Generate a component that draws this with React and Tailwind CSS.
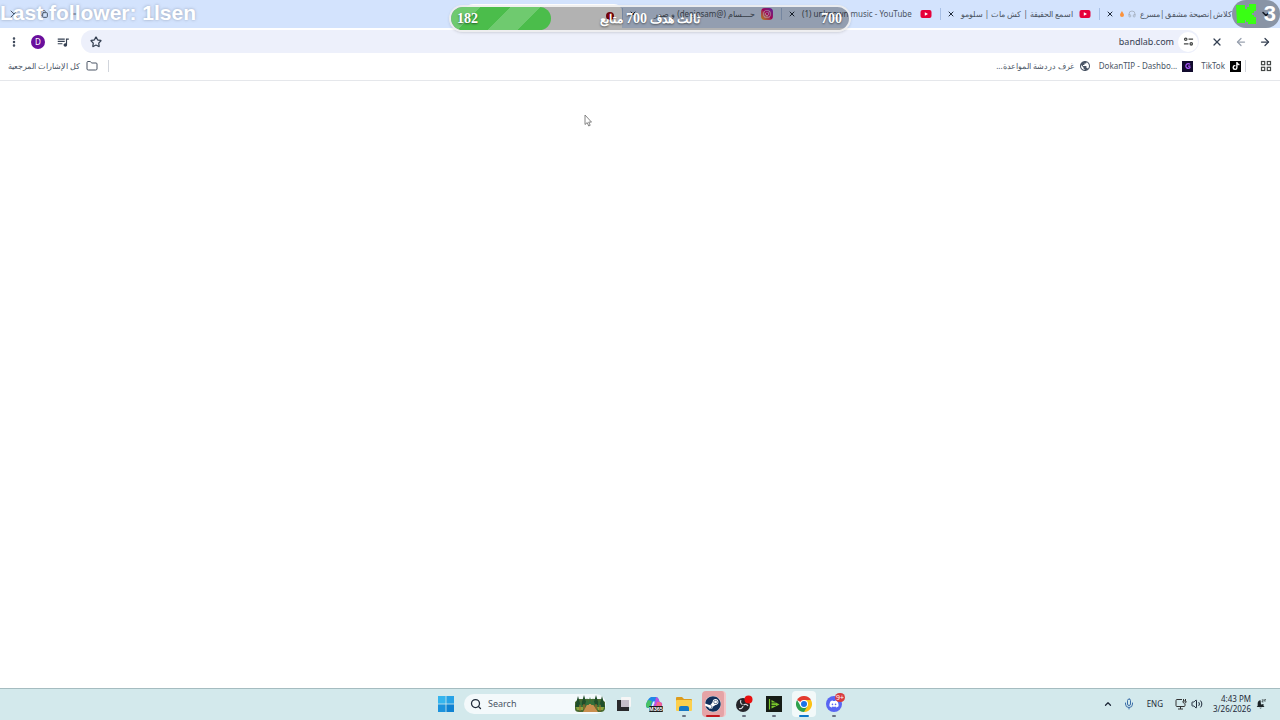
import { X, Star, EllipsisVertical, ArrowLeft, ArrowRight, Folder, Search, ChevronUp, ChevronDown, Mic, Volume2, Headphones, Copy, Minus, Plus } from "lucide-react";
import { FaSteam, FaDiscord, FaTiktok, FaInstagram } from "react-icons/fa";
import { MdOutlineQueueMusic, MdPublic } from "react-icons/md";

const tabs = [
  { title: "كلاش|نصيحة مشفق|مسرع", icon: "youtube", audio: true },
  { title: "اسمع الحقيقة | كش مات | سلومو", icon: "youtube" },
  { title: "(1) unknown music - YouTube", icon: "youtube", ltr: true },
  { title: "حــــسام (@deejosam) و صور", icon: "instagram" },
];

function YoutubeIcon() {
  return (
    <svg viewBox="0 0 12 12" className="size-3 shrink-0">
      <rect x="0.5" y="2" width="11" height="8" rx="2" fill="#e6003a" />
      <path d="M4.8 4.2v3.6L8 6z" fill="#fff" />
    </svg>
  );
}

function InstagramIcon() {
  return (
    <span className="flex size-3 shrink-0 items-center justify-center rounded-sm bg-linear-to-tr from-amber-400 via-pink-600 to-purple-700">
      <FaInstagram className="size-2 text-white" />
    </span>
  );
}

function Tab({ tab }) {
  return (
    <div className="flex h-full w-[159px] shrink-0 items-center gap-[6px] ps-2 text-[#4b5563]">
      {tab.icon === "youtube" ? <YoutubeIcon /> : <InstagramIcon />}
      <span dir={tab.ltr ? "ltr" : "rtl"} className="flex w-[112px] shrink-0 items-center justify-start gap-1 text-[8px] whitespace-nowrap">
        {tab.title}
        {tab.audio && <Headphones className="size-2 shrink-0 text-gray-400" />}
        {tab.audio && (
          <svg viewBox="0 0 6 10" className="h-2 w-1 shrink-0">
            <path d="M3 0c0 2 3 4 3 6.500a3 3 0 0 1-6 0C0 4 2 3 3 0z" fill="#fb923c" />
          </svg>
        )}
      </span>
      <button aria-label="Close tab">
        <X className="size-2 text-gray-800" strokeWidth={3} />
      </button>
      <span className="h-3 w-px bg-[#a8c0e6]" />
    </div>
  );
}

function TabStrip() {
  return (
    <div className="flex h-7 items-center bg-[#d3e3fd] ps-2">
      <button aria-label="Search tabs" className="flex w-[14px] justify-start">
        <ChevronDown className="size-3 text-gray-800" strokeWidth={3} />
      </button>
      <div className="flex h-full">
        {tabs.map((tab) => (
          <Tab key={tab.title} tab={tab} />
        ))}
      </div>
      {/* active tab */}
      <div className="mt-1 flex h-6 w-[157px] items-center rounded-t-lg bg-white ps-2">
        <span className="size-2 rounded-full border-2 border-red-800 bg-red-600" />
      </div>
      <button aria-label="New tab">
        <Plus className="size-3 text-gray-700" />
      </button>
      <div className="ms-auto flex items-center gap-5 pe-2 text-gray-600">
        <button aria-label="Minimize"><Minus className="size-3" /></button>
        <button aria-label="Restore"><Copy className="size-2" strokeWidth={3} /></button>
        <button aria-label="Close"><X className="size-3" /></button>
      </div>
    </div>
  );
}

function Toolbar() {
  return (
    <div className="flex h-[27px] items-center bg-white px-2 text-gray-700">
      <div className="flex items-center gap-3 ps-px">
        <button aria-label="Back"><ArrowRight className="size-3" strokeWidth={2.5} /></button>
        <button aria-label="Forward"><ArrowLeft className="size-3 text-gray-400" strokeWidth={2.5} /></button>
        <button aria-label="Stop"><X className="size-3" strokeWidth={2.5} /></button>
      </div>
      <div className="ms-3 flex h-[23px] flex-1 items-center rounded-full bg-[#edf0fb] ps-px pe-[9px]">
        <button aria-label="Site information" className="flex size-5 items-center justify-center rounded-full bg-white">
          <svg viewBox="0 0 12 12" className="size-[11px]" fill="none" stroke="#444746" strokeWidth="1.4">
            <circle cx="3" cy="3.5" r="1.3" />
            <path d="M6 3.5h5M1 8.5h5" />
            <circle cx="9" cy="8.5" r="1.3" />
          </svg>
        </button>
        <input
          aria-label="Address"
          dir="ltr"
          defaultValue="bandlab.com"
          className="min-w-0 flex-1 bg-transparent px-1 text-right text-[9px] text-gray-700 outline-none"
        />
        <button aria-label="Bookmark this tab"><Star className="size-3" strokeWidth={2.5} /></button>
      </div>
      <div className="ms-[11px] flex items-center gap-[11px]">
        <button aria-label="Media controls"><MdOutlineQueueMusic className="size-[14px]" /></button>
        <button aria-label="Profile" className="size-[14px] rounded-full bg-[#6a0f9c] text-center text-[8px] leading-[14px] text-white">D</button>
        <button aria-label="Menu"><EllipsisVertical className="size-3" strokeWidth={3} /></button>
      </div>
    </div>
  );
}

function BookmarksBar() {
  return (
    <nav className="flex h-[26px] items-center border-b border-gray-200 bg-white px-2 pb-[3px] text-[8px] text-gray-600">
      <button aria-label="Apps" className="me-[14px]">
        <svg viewBox="0 0 12 12" className="size-3" fill="none" stroke="#444746" strokeWidth="1.2">
          <rect x="1.500" y="1.500" width="3.200" height="3.200" />
          <rect x="7.300" y="1.500" width="3.200" height="3.200" />
          <rect x="1.500" y="7.300" width="3.200" height="3.200" />
          <rect x="7.300" y="7.300" width="3.200" height="3.200" />
        </svg>
      </button>
      <span className="me-1 h-3 w-px bg-gray-300" />
      <div className="flex items-center gap-2">
        <a href="#tiktok" className="flex items-center gap-[5px]">
          <span className="flex size-[11px] items-center justify-center bg-black text-white"><FaTiktok className="size-2" /></span>
          <span>TikTok</span>
        </a>
        <a href="#dokantip" className="flex items-center gap-[5px]">
          <span className="flex size-[11px] items-center justify-center bg-[#120b2e]">
            <svg viewBox="0 0 8 8" className="size-2" fill="none" stroke="#a855f7" strokeWidth="1.3">
              <path d="M6 2.300A2.400 2.400 0 1 0 6.300 5.200M4 4.200h2.500" />
            </svg>
          </span>
          <span dir="ltr">DokanTIP - Dashbo...</span>
        </a>
        <a href="#chat" className="flex items-center gap-[5px]">
          <MdPublic className="size-3" />
          <span>غرف دردشة المواعدة...</span>
        </a>
      </div>
      <span className="ms-auto h-3 w-px bg-gray-300" />
      <button className="ms-[10px] flex items-center gap-[6px]">
        <Folder className="size-3" />
        كل الإشارات المرجعية
      </button>
    </nav>
  );
}

function StreamOverlay() {
  return (
    <>
      <p className="absolute top-0 left-0 font-['Liberation_Sans',sans-serif] text-[21px] leading-[26px] font-bold text-white text-shadow-[0_0_3px_rgb(110_120_140/0.6)]">
        Last follower: 1lsen
      </p>
      <div className="absolute top-[5px] left-1/2 ms-[10px] flex h-[27px] w-[402px] -translate-x-1/2 items-center overflow-hidden rounded-full border-2 border-white/80 bg-black/30 font-['Liberation_Serif',serif] text-[14px] font-bold text-white shadow text-shadow-[0_1px_2px_rgb(0_0_0/0.5)]">
        <div className="flex h-full w-1/4 items-center rounded-full bg-[#4bbd4b] bg-[linear-gradient(135deg,rgb(255_255_255/0.2)_25%,transparent_25%,transparent_50%,rgb(255_255_255/0.2)_50%,rgb(255_255_255/0.2)_75%,transparent_75%)] bg-size-[60px_60px] ps-[6px]">
          182
        </div>
        <span dir="rtl" className="flex-1 text-center text-[12px]">
          ثالث هدف <span className="text-[14px]">700</span> متابع
        </span>
        <span className="w-1/4 pe-[7px] text-right">700</span>
      </div>
      <div className="absolute top-0 right-0 flex h-7 w-12 items-center justify-between rounded-full bg-black/35 ps-1 pe-1">
        <svg viewBox="0 0 20 20" className="size-5" fill="#39ff14">
          <path d="M0 1h9v4h2V3h2V0h7v7h-2v2h-2v2h2v2h2v7h-8v-2h-2v-2H9v3H1z" />
        </svg>
        <span className="font-['Liberation_Sans',sans-serif] text-[22px] leading-7 font-bold text-white">3</span>
      </div>
    </>
  );
}

function Cursor() {
  return (
    <svg viewBox="0 0 8 13" className="absolute top-[114px] left-[584px] h-[13px] w-2" fill="#fff" stroke="#777" strokeWidth="0.9">
      <path d="M1 1v9.500l2.200-1.900 1.500 3.400 1.500-.700-1.500-3.200h2.800z" />
    </svg>
  );
}

function WindowsLogo() {
  return (
    <svg viewBox="0 0 16 16" className="size-4">
      <path d="M0 0h7.600v7.600H0z" fill="#35b5ee" />
      <path d="M8.400 0H16v7.600H8.400z" fill="#27a2e6" />
      <path d="M0 8.400h7.600V16H0z" fill="#1c93dd" />
      <path d="M8.400 8.400H16V16H8.400z" fill="#0f82d2" />
    </svg>
  );
}

function ForestArt() {
  return (
    <svg viewBox="0 0 32 18" className="h-[18px] w-8">
      <path d="M1 7l4-3h22l4 3v7q-1 3-4 3H5q-4 0-4-3z" fill="#4a6b2f" />
      <path d="M14 8h4l6 9H9z" fill="#c98f4f" />
      <path d="M4 1l3 11H1zM10 0l3 10H7zM22 0l3 10h-6zM28 1l3 11h-6z" fill="#1f4d2a" />
      <path d="M7 5l2 9H4zM25 5l3 9h-5zM16 2l2 7h-4zM13 3l2 7h-4zM19 3l2 7h-4z" fill="#33703a" />
      <path d="M2 12h7v3H3zM23 12h7l-1 3h-5z" fill="#8aa33c" />
      <path d="M6 10v6M10 9v5M22 9v5M26 10v6" stroke="#a56a2c" strokeWidth="1" />
    </svg>
  );
}

function TaskViewIcon() {
  return (
    <svg viewBox="0 0 16 16" className="size-4">
      <rect x="5" y="1" width="10" height="10" rx="1" fill="#f6f6f6" />
      <path d="M1 4h4v7h8v4H1z" fill="#29292c" />
      <rect x="5" y="4" width="8" height="7" fill="#c6bfca" />
    </svg>
  );
}

function CopilotIcon() {
  return (
    <svg viewBox="0 0 18 18" className="size-[18px]">
      <path d="M6 2h5q2 0 2.500 2L15 8H9L7 13H3q-2 0-2-2.500Q2 4 6 2z" fill="#2187e8" />
      <path d="M1 9 3 5l4 1-2 7H3q-2.500-1-2-4z" fill="#47c264" />
      <path d="M11 2q3 1 3.500 5Q18 7 17 10.500 16 14 12 14H7l3-7z" fill="#bd4fe0" />
      <path d="M12 7h3q2.500 1 1.500 4l-2 2h-4z" fill="#f2668c" />
      <path d="M8 6.500h2L8 11H6.500z" fill="#e8f7fb" />
      <rect x="4" y="11" width="14" height="6" rx="1" fill="#1b1b1b" />
      <text x="11" y="16" fontSize="5.500" fontWeight="700" textAnchor="middle" fill="#fff" fontFamily="Liberation Sans">M365</text>
    </svg>
  );
}

function ExplorerIcon() {
  return (
    <svg viewBox="0 0 18 16" className="h-4 w-[18px]">
      <path d="M1 2q0-1 1-1h5l2 2h7q1 0 1 1v3H1z" fill="#dd9c1c" />
      <rect x="1" y="4" width="16" height="11" rx="1" fill="#fccf4b" />
      <path d="M4 15v-3q0-2 2-2h6q2 0 2 2v3z" fill="#1879c4" />
    </svg>
  );
}

function ObsIcon() {
  return (
    <svg viewBox="0 0 18 18" className="size-[18px]">
      <circle cx="8" cy="10" r="7" fill="#25252a" />
      <g fill="none" stroke="#d4d4d8" strokeWidth="1.200">
        <path d="M7.500 9.500a3 3 0 0 1-1.500-4.500M8.500 10a3 3 0 0 1 4.500 1M8 11a3 3 0 0 1-4 2.500" />
      </g>
      <circle cx="13.500" cy="4.500" r="4" fill="#e80f0f" />
    </svg>
  );
}

function PlayerIcon() {
  return (
    <svg viewBox="0 0 16 16" className="size-4">
      <rect width="16" height="16" fill="#161c16" />
      <path d="M3.500 3v10.500" stroke="#79c52b" strokeWidth="1.200" />
      <path d="M5.500 4l8 4.500-8 4z" fill="#79c52b" />
      <path d="M5 6.800h5M5 9.500h5" stroke="#161c16" strokeWidth=".7" />
    </svg>
  );
}

function ChromeIcon() {
  return (
    <svg viewBox="0 0 16 16" className="size-4">
      <path d="M8 8 1.070 4A8 8 0 0 1 14.930 4z" fill="#e33b2e" />
      <path d="M8 8V4h6.930A8 8 0 0 1 8 16z" fill="#fbc116" />
      <path d="M8 16A8 8 0 0 1 1.070 4l3.470 6L8 8l3.460 2z" fill="#2da14c" />
      <circle cx="8" cy="8" r="4" fill="#fff" />
      <circle cx="8" cy="8" r="3" fill="#1a73e8" />
    </svg>
  );
}

const apps = [
  { name: "Task View", icon: <TaskViewIcon /> },
  { name: "Microsoft 365 Copilot", icon: <CopilotIcon /> },
  { name: "File Explorer", icon: <ExplorerIcon />, bar: "w-1 bg-gray-500" },
  {
    name: "Steam",
    icon: (
      <span className="flex size-4 items-center justify-center rounded-full bg-white text-[#12305c]">
        <FaSteam className="size-4" />
      </span>
    ),
    box: "border-e-2 border-[#f3c5c7] bg-[#e5a3a6]",
    bar: "w-[14px] bg-[#c4161c]",
  },
  { name: "OBS Studio", icon: <ObsIcon />, bar: "w-1 bg-gray-500" },
  { name: "Player", icon: <PlayerIcon />, bar: "w-1 bg-gray-500" },
  { name: "Google Chrome", icon: <ChromeIcon />, box: "bg-white/70", bar: "w-[10px] bg-[#0f78c8]" },
  {
    name: "Discord",
    icon: (
      <span className="relative flex size-4 items-center justify-center rounded-full bg-[#5865f2] text-white">
        <FaDiscord className="size-[10px]" />
        <span className="absolute -top-[3px] -right-[3px] rounded-full bg-[#d83c3e] px-px text-[7px] leading-[9px]">9+</span>
      </span>
    ),
    bar: "w-1 bg-gray-500",
  },
];

function Taskbar() {
  return (
    <footer className="grid h-8 grid-cols-[1fr_auto_1fr] items-center border-t border-[#a5bcc0] bg-[#d3e9ec] pb-px text-gray-800">
      <div />
      <div className="flex items-center gap-[3px]">
        <button aria-label="Start" className="flex w-[30px] justify-center"><WindowsLogo /></button>
        <label className="flex h-5 w-[142px] items-center gap-[6px] rounded-full bg-[#f3f9fb] ps-[6px]">
          <Search className="size-3" strokeWidth={2.5} />
          <input aria-label="Search" placeholder="Search" className="min-w-0 flex-1 bg-transparent text-[9px] outline-none placeholder:text-gray-600" />
          <ForestArt />
        </label>
        <div className="flex">
          {apps.map((app) => (
            <button key={app.name} aria-label={app.name} className="flex w-[30px] justify-center">
              <span className={`relative flex h-[26px] w-6 items-center justify-center rounded-sm ${app.box || ""}`}>
                {app.icon}
                {app.bar && <span className={`absolute bottom-0 h-0.5 rounded-full ${app.bar}`} />}
              </span>
            </button>
          ))}
        </div>
      </div>
      <div className="flex items-center justify-end pe-[14px] text-[8px]">
        <button aria-label="Show hidden icons"><ChevronUp className="size-[10px]" strokeWidth={3} /></button>
        <button aria-label="Microphone" className="ms-[10px]"><Mic className="size-3 text-[#3b6ea8]" /></button>
        <button className="ms-3">ENG</button>
        <button aria-label="Network and volume" className="ms-3 flex items-center gap-1">
          <svg viewBox="0 0 12 12" className="size-3" fill="none" stroke="#333" strokeWidth="1">
            <path d="M7 1.500H2q-1 0-1 1v5q0 1 1 1h7q1 0 1-1V6M3 11h5M5.500 8.500V11M8.500 1v2M10.500 1v2M8 3h3v1.500q-1.500 1.500-3 0z" />
          </svg>
          <Volume2 className="size-3" />
        </button>
        <div className="ms-[10px] text-right leading-[10px]">
          <p>4:43 PM</p>
          <p>3/26/2026</p>
        </div>
        <button aria-label="Notifications" className="ms-[5px]">
          <svg viewBox="0 0 12 12" className="size-[10px]">
            <path d="M5.500 1.500Q2 2 2 5.500V8L.800 9.500h9.400L9 8V6L6 6.500z" fill="#1c2427" />
            <path d="M4 10.500h3q-1.500 1.800-3 0z" fill="#1c2427" />
            <path d="M7 1h2L7 3.500h2M10 .500h1.500L10 2.500h1.500" stroke="#1c2427" strokeWidth=".8" fill="none" />
          </svg>
        </button>
      </div>
    </footer>
  );
}

export default function App() {
  return (
    <div className="relative flex min-h-screen flex-col overflow-hidden bg-white font-['Noto_Sans',sans-serif]">
      <header dir="rtl">
        <TabStrip />
        <Toolbar />
        <BookmarksBar />
      </header>
      <main className="flex-1" />
      <Taskbar />
      <StreamOverlay />
      <Cursor />
    </div>
  );
}
